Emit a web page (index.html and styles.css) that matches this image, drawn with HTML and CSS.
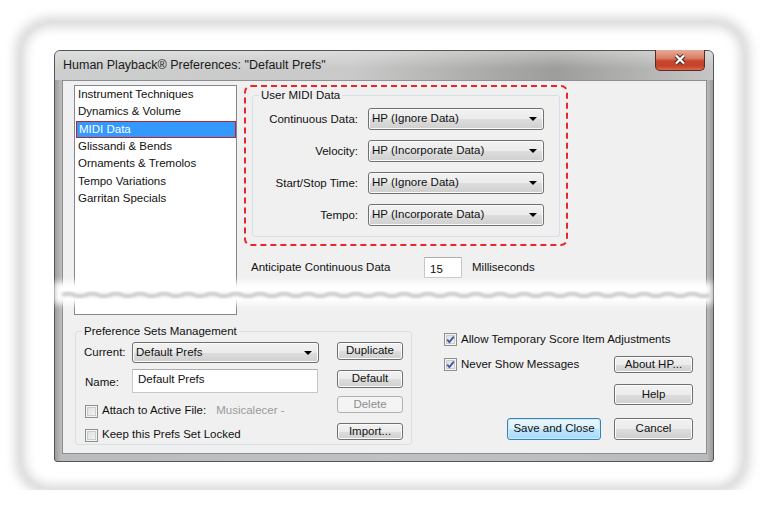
FILE: index.html
```html
<!DOCTYPE html>
<html>

<head lang="en">
    <meta charset="UTF-8">
    <title>Human Playback Preferences</title>
    <link rel="stylesheet" href="styles.css">
</head>

<body>
    <div class="frame">
        <div class="window">
            <div class="titlebar">
                <span class="title">Human Playback® Preferences: "Default Prefs"</span>
                <span class="close">
                    <svg width="50" height="21" viewBox="0 0 50 21">
                        <path d="M21 6.5 L29 14.5 M29 6.5 L21 14.5" stroke="#4a241c" stroke-width="4.4" fill="none" />
                        <path d="M21 6.5 L29 14.5 M29 6.5 L21 14.5" stroke="#fff" stroke-width="2.4" fill="none" />
                    </svg>
                </span>
            </div>

            <div class="client">
                <div class="top">
                    <ul class="list">
                        <li>Instrument Techniques</li>
                        <li>Dynamics &amp; Volume</li>
                        <li class="selected">MIDI Data</li>
                        <li>Glissandi &amp; Bends</li>
                        <li>Ornaments &amp; Tremolos</li>
                        <li>Tempo Variations</li>
                        <li>Garritan Specials</li>
                    </ul>

                    <div class="pane">
                        <div class="highlight">
                            <fieldset class="group midi">
                                <legend>User MIDI Data</legend>
                                <div class="rows">
                                    <label>Continuous Data:</label>
                                    <div class="combo"><span>HP (Ignore Data)</span><i class="arrow"></i></div>
                                    <label>Velocity:</label>
                                    <div class="combo"><span>HP (Incorporate Data)</span><i class="arrow"></i></div>
                                    <label>Start/Stop Time:</label>
                                    <div class="combo"><span>HP (Ignore Data)</span><i class="arrow"></i></div>
                                    <label>Tempo:</label>
                                    <div class="combo"><span>HP (Incorporate Data)</span><i class="arrow"></i></div>
                                </div>
                            </fieldset>
                        </div>

                        <div class="anticipate">
                            <span class="anticipate-label">Anticipate Continuous Data</span>
                            <span class="field short">15</span>
                            <span class="unit">Milliseconds</span>
                        </div>
                    </div>
                </div>

                <div class="bottom">
                    <fieldset class="group sets">
                        <legend>Preference Sets Management</legend>
                        <div class="sets-body">
                            <div class="sets-left">
                                <div class="line line-current">
                                    <span class="line-label">Current:</span>
                                    <div class="combo wide"><span>Default Prefs</span><i class="arrow"></i></div>
                                </div>
                                <div class="line line-name">
                                    <span class="line-label name-label">Name:</span>
                                    <span class="field name">Default Prefs</span>
                                </div>
                                <div class="line check-line first">
                                    <span class="check"></span>
                                    <span>Attach to Active File:</span>
                                    <span class="muted">Musicalecer -</span>
                                </div>
                                <div class="line check-line">
                                    <span class="check"></span>
                                    <span>Keep this Prefs Set Locked</span>
                                </div>
                            </div>
                            <div class="sets-buttons">
                                <button class="btn b1">Duplicate</button>
                                <button class="btn b2">Default</button>
                                <button class="btn b3" disabled>Delete</button>
                                <button class="btn b4">Import...</button>
                            </div>
                        </div>
                    </fieldset>

                    <div class="options">
                        <div class="opt-line">
                            <span class="check on">
                                <svg width="11" height="11" viewBox="0 0 11 11"><path d="M2.2 5.6 L4.4 8 L8.8 2.6" stroke="#3a57a3" stroke-width="1.8" fill="none" /></svg>
                            </span>
                            <span>Allow Temporary Score Item Adjustments</span>
                        </div>
                        <div class="opt-line spread">
                            <span class="opt-check">
                                <span class="check on">
                                    <svg width="11" height="11" viewBox="0 0 11 11"><path d="M2.2 5.6 L4.4 8 L8.8 2.6" stroke="#3a57a3" stroke-width="1.8" fill="none" /></svg>
                                </span>
                                <span>Never Show Messages</span>
                            </span>
                            <button class="btn side about">About HP...</button>
                        </div>
                        <button class="btn side help">Help</button>
                        <div class="actions">
                            <button class="btn default save">Save and Close</button>
                            <button class="btn side cancel">Cancel</button>
                        </div>
                    </div>
                </div>
            </div>
        </div>

        <!-- torn edge across the middle of the shot -->
        <div class="tear">
            <svg width="670" height="34" viewBox="0 0 670 34">
                <defs>
                    <filter id="soft" x="-5%" y="-50%" width="110%" height="200%">
                        <feGaussianBlur stdDeviation="3" />
                    </filter>
                    <filter id="line" x="-5%" y="-100%" width="110%" height="300%">
                        <feGaussianBlur stdDeviation="1.6" />
                    </filter>
                </defs>
                <rect x="6" y="6" width="658" height="22" fill="#fff" filter="url(#soft)" />
                <path d="M14 19 q6 -2.5 12 0 t12 0 t12 0 t12 0 t12 0 t12 0 t12 0 t12 0 t12 0 t12 0 t12 0 t12 0 t12 0 t12 0 t12 0 t12 0 t12 0 t12 0 t12 0 t12 0 t12 0 t12 0 t12 0 t12 0 t12 0 t12 0 t12 0 t12 0 t12 0 t12 0 t12 0 t12 0 t12 0 t12 0 t12 0 t12 0 t12 0 t12 0 t12 0 t12 0 t12 0 t12 0 t12 0 t12 0 t12 0 t12 0 t12 0 t12 0 t12 0 t12 0 t12 0 t12 0 t12 0 t12 0"
                    stroke="#c8c8c8" stroke-width="4" fill="none" filter="url(#line)" />
            </svg>
        </div>
    </div>
</body>

</html>
```

FILE: styles.css
```css
/* reset */
body,
ul,
li,
fieldset,
legend {
    margin: 0;
    padding: 0;
}

ul {
    list-style: none;
}

body {
    background: #fff;
    font: 11.5px/1.2 "Liberation Sans", Arial, sans-serif;
    color: #111;
}

button {
    font: inherit;
    color: inherit;
    padding: 0;
}

/* soft grey frame around the shot */
.frame {
    position: relative;
    width: 725px;
    height: 468px;
    margin: 22px 0 0 20px;
    padding: 28px 0 0 34px;
    box-sizing: border-box;
    border-radius: 30px;
    box-shadow: 0 0 11px 5px #d9d9d9, inset 0 0 11px 5px #d9d9d9;
}

/* window chrome */
.window {
    width: 660px;
    height: 412px;
    box-sizing: border-box;
    border: 1px solid #555;
    border-radius: 6px 6px 3px 3px;
    padding-bottom: 7px;
    background: linear-gradient(to right, #9c9c9c 0, #b9bbbc 6px, #bfc1c2 50%, #b9bbbc calc(100% - 6px), #9c9c9c 100%);
    display: flex;
    flex-direction: column;
}

.titlebar {
    height: 29px;
    display: flex;
    justify-content: space-between;
    border-radius: 5px 5px 0 0;
    background:
        linear-gradient(rgba(255, 255, 255, 0.35), rgba(255, 255, 255, 0) 60%),
        linear-gradient(to right, #cdcece 0%, #c9c9c9 45%, #adadab 64%, #9d9d9b 76%, #b1b1af 88%, #c6c6c6 100%);
}

.title {
    padding-left: 8px;
    line-height: 29px;
    font-size: 12.5px;
    color: #1a1a1a;
}

.close {
    width: 50px;
    height: 21px;
    margin: -1px 8px 0 0;
    box-sizing: border-box;
    border: 1px solid #5b2a22;
    border-top: 0;
    border-radius: 0 0 5px 5px;
    background: linear-gradient(#e6a998 0%, #d98068 40%, #c8452c 55%, #c4432a 80%, #d76a50 100%);
}

.close svg {
    display: block;
    margin: -1px 0 0 -1px;
}

.client {
    flex: 1;
    margin: 0 6px 0 7px;
    border: 1px solid #8c8e90;
    background: #f0f0f0;
    padding: 4px 0 0 11px;
}

/* upper half */
.top {
    display: flex;
    height: 230px;
}

.list {
    width: 163px;
    height: 230px;
    box-sizing: border-box;
    border: 1px solid #828790;
    background: #fff;
}

.list li {
    height: 17.33px;
    line-height: 17.33px;
    padding-left: 3px;
    white-space: nowrap;
}

.list .selected {
    margin: 0 0 0 1px;
    width: 160px;
    box-sizing: border-box;
    padding-left: 2px;
    background: #3399ff;
    color: #fff;
    border: 1px solid #b8232c;
    line-height: 15.33px;
}

.pane {
    margin-left: 7px;
    width: 324px;
}

.highlight {
    height: 161px;
    box-sizing: border-box;
    border: 2px dashed #e8262c;
    border-radius: 7px;
    padding: 2px 6px 7px 6px;
}

.group {
    border: 1px solid #d5dfe5;
    border-radius: 3px;
    min-width: 0;
}

.group legend {
    margin-left: 6px;
    padding: 0 2px;
    line-height: 12px;
}

.midi {
    padding-bottom: 10px;
}

.rows {
    display: grid;
    grid-template-columns: 105px 176px;
    column-gap: 10px;
    row-gap: 10px;
    padding-top: 7px;
}

.rows label {
    text-align: right;
    line-height: 22px;
}

.combo {
    height: 22px;
    box-sizing: border-box;
    border: 1px solid #707070;
    border-radius: 3px;
    background: linear-gradient(#f2f2f2 0%, #ebebeb 50%, #dddddd 51%, #cfcfcf 100%);
    box-shadow: inset 0 0 0 1px #fbfbfb;
    display: flex;
    align-items: center;
    justify-content: space-between;
    padding: 0 6px 0 3px;
}

.arrow {
    width: 0;
    height: 0;
    border-left: 4px solid transparent;
    border-right: 4px solid transparent;
    border-top: 4px solid #000;
}

.anticipate {
    margin-top: 11px;
    height: 21px;
    padding-left: 7px;
    display: flex;
    align-items: center;
}

.anticipate-label {
    width: 173px;
}

.field {
    background: #fff;
    box-sizing: border-box;
    border: 1px solid #c5c8ce;
    border-top-color: #abadb3;
}

.short {
    width: 38px;
    height: 21px;
    padding: 5px 0 0 5px;
}

.unit {
    margin-left: 10px;
}

/* lower half */
.bottom {
    display: flex;
    margin-top: 10px;
}

.sets {
    margin-left: 1px;
    width: 337px;
    box-sizing: border-box;
    padding: 5px 8px 2px 8px;
}

.sets legend {
    margin-left: -2px;
}

.sets-body {
    display: flex;
    justify-content: space-between;
}

.sets-left {
    width: 235px;
}

.line {
    display: flex;
    align-items: center;
}

.line-current {
    height: 21px;
}

.line-label {
    width: 48px;
    flex: none;
}

.name-label {
    padding-left: 1px;
    width: 47px;
    padding-top: 3px;
}

.combo.wide {
    width: 187px;
    height: 21px;
}

.line-name {
    margin-top: 6px;
    height: 24px;
}

.field.name {
    width: 186px;
    height: 24px;
    padding: 2px 0 0 5px;
    align-self: flex-start;
    line-height: 15px;
}

.check-line {
    height: 14px;
    margin-top: 10px;
    padding-left: 1px;
    gap: 4px;
}

.check-line.first {
    margin-top: 11px;
}

.muted {
    margin-left: 6px;
    color: #9a9a9a;
}

.check {
    width: 13px;
    height: 13px;
    flex: none;
    box-sizing: border-box;
    border: 1px solid #8e8f8f;
    background: linear-gradient(135deg, #d9dadb, #f7f7f7);
    box-shadow: inset 0 0 0 1px #f4f4f4, inset 0 0 0 2px #c9cbcd;
}

.check svg {
    display: block;
    margin: 0;
}

.sets-buttons {
    width: 66px;
    display: flex;
    flex-direction: column;
}

.btn {
    box-sizing: border-box;
    border: 1px solid #707070;
    border-radius: 3px;
    background: linear-gradient(#f2f2f2 0%, #ebebeb 50%, #dddddd 51%, #cfcfcf 100%);
    box-shadow: inset 0 0 0 1px #fcfcfc;
    line-height: 1;
}

.btn[disabled] {
    border-color: #adb2b5;
    background: #f4f4f4;
    color: #8d8d8d;
    box-shadow: none;
}

.b1,
.b2 {
    height: 18px;
}

.b2 {
    margin-top: 10px;
}

.b3 {
    height: 17px;
    margin-top: 8px;
}

.b4 {
    height: 17px;
    margin-top: 10px;
}

.options {
    margin-left: 32px;
    width: 249px;
    padding-top: 8px;
    display: flex;
    flex-direction: column;
}

.opt-line {
    display: flex;
    align-items: center;
    gap: 4px;
    height: 13px;
}

.opt-line.spread {
    justify-content: space-between;
    height: 17px;
    margin-top: 10px;
}

.opt-check {
    display: flex;
    align-items: center;
    gap: 4px;
}

.side {
    width: 79px;
}

.about {
    height: 17px;
}

.help {
    align-self: flex-end;
    height: 21px;
    margin-top: 11px;
}

.actions {
    margin-top: 13px;
    display: flex;
    justify-content: flex-end;
    gap: 13px;
}

.save {
    width: 94px;
    height: 22px;
}

.cancel {
    height: 22px;
}

.btn.default {
    border-color: #3c7fb1;
    background: linear-gradient(#eaf6fd 0%, #d9f0fc 50%, #bee6fd 51%, #a7d9f5 100%);
    box-shadow: inset 0 0 0 1px #c8ecfc;
}

/* torn strip lies over the window */
.tear {
    position: absolute;
    left: 28px;
    top: 254px;
    width: 670px;
    height: 34px;
}

.tear svg {
    display: block;
}
```
